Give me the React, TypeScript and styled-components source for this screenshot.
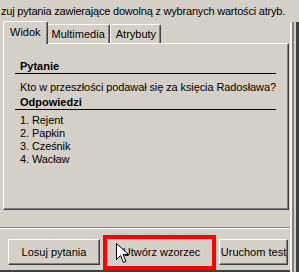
import React from "react";
import styled, { createGlobalStyle } from "styled-components";

const Global = createGlobalStyle`
  html, body { margin: 0; padding: 0; background: #d4d0c8; }
  body { font-family: "Liberation Sans", Arial, sans-serif; font-size: 11px; color: #000; }
`;

const Window = styled.div`
  width: 299px;
  height: 272px;
  display: flex;
  overflow: hidden;
  background: #d4d0c8;
  position: relative;
`;

const Main = styled.div`
  width: 290px;
  display: flex;
  flex-direction: column;
`;

const RightFrame = styled.div`
  flex: 1;
  border-left: 2px solid #f4f2ee;
  box-shadow: inset 2px 0 0 #808080, inset -3px 0 0 #404040;
  margin-top: 22px;
`;

const Caption = styled.div`
  height: 21px;
  padding: 5px 0 0 1px;
  box-sizing: border-box;
  white-space: nowrap;
  line-height: 13px;
  letter-spacing: -0.2px;
`;

const TabRow = styled.div`
  display: flex;
  align-items: flex-end;
  height: 22px;
  padding-left: 3px;
  position: relative;
  z-index: 1;
`;

const Tab = styled.div<{ $active?: boolean }>`
  height: 19px;
  box-sizing: border-box;
  padding: 3px 4px 0 5px;
  border-top: 1px solid #fff;
  border-left: 1px solid #fff;
  border-right: 1px solid #404040;
  box-shadow: inset -1px 0 0 #808080;
  border-radius: 2px 2px 0 0;
  background: #d4d0c8;
  font-size: 11px;
  line-height: 13px;
  white-space: nowrap;
  ${(p) =>
    p.$active
      ? "z-index: 2; position: relative; height: 23px; margin: 0 -2px -1px 0; padding: 4px 6px 0 6px;"
      : ""}
`;

const Panel = styled.div`
  margin-left: 3px;
  width: 286px;
  height: 168px;
  box-sizing: border-box;
  border-top: 1px solid #fff;
  border-left: 1px solid #fff;
  border-right: 1px solid #404040;
  border-bottom: 1px solid #404040;
  box-shadow: inset -1px -1px 0 #808080;
  padding: 16px 12px 0 11px;
`;

const Heading = styled.div`
  font-weight: bold;
  font-size: 11px;
  line-height: 13px;
  padding-left: 5px;
  border-bottom: 1px solid #000;
  width: 256px;
`;

const Body = styled.div<{ $top: number; $bottom: number }>`
  padding: ${(p) => p.$top}px 0 ${(p) => p.$bottom}px 5px;
  font-size: 11px;
  line-height: 13px;
  white-space: nowrap;
  letter-spacing: -0.1px;
`;

const Separator = styled.div`
  height: 20px;
  box-sizing: border-box;
  border-bottom: 1px solid #fff;
  box-shadow: inset 0 -1px 0 #808080;
  margin-bottom: 5px;
`;

const ButtonRow = styled.div`
  display: flex;
  align-items: center;
  padding-left: 8px;
  gap: 3px;
  height: 36px;
  border-bottom: 2px solid #404040;
`;

const Button = styled.div<{ $w: number }>`
  width: ${(p) => p.$w}px;
  height: 26px;
  box-sizing: border-box;
  display: flex;
  align-items: center;
  justify-content: center;
  border-top: 1px solid #fff;
  border-left: 1px solid #fff;
  border-right: 1px solid #404040;
  border-bottom: 1px solid #404040;
  box-shadow: inset -1px -1px 0 #808080;
  font-size: 11px;
  white-space: nowrap;
`;

const Highlight = styled.div`
  width: 113px;
  height: 35px;
  box-sizing: border-box;
  border: 4px solid #ff0000;
  display: flex;
  align-items: center;
  justify-content: center;
  position: relative;
  font-size: 11px;
  white-space: nowrap;
  padding-left: 4px;
`;

const Cursor = styled.svg`
  position: absolute;
  left: 9px;
  top: 4px;
`;

export default function App() {
  return (
    <>
      <Global />
      <Window>
        <Main>
          <Caption>zuj pytania zawierające dowolną z wybranych wartości atryb.</Caption>
          <TabRow>
            <Tab $active>Widok</Tab>
            <Tab>Multimedia</Tab>
            <Tab>Atrybuty</Tab>
          </TabRow>
          <Panel>
            <Heading>Pytanie</Heading>
            <Body $top={7} $bottom={2}>Kto w przeszłości podawał się za księcia Radosława?</Body>
            <Heading>Odpowiedzi</Heading>
            <Body $top={4} $bottom={0}>
              1. Rejent<br />2. Papkin<br />3. Cześnik<br />4. Wacław
            </Body>
          </Panel>
          <Separator />
          <ButtonRow>
            <Button $w={92}>Losuj pytania</Button>
            <Highlight>
              Utwórz wzorzec
              <Cursor width="13" height="21" viewBox="0 0 13 21">
                <path d="M0.5 0.5 L0.5 16.5 L4.5 12.5 L7.5 19.5 L10 18.5 L7 11.5 L12.5 11.5 Z" fill="#fff" stroke="#000" strokeWidth="1" />
              </Cursor>
            </Highlight>
            <Button $w={69}>Uruchom test</Button>
          </ButtonRow>
        </Main>
        <RightFrame />
      </Window>
    </>
  );
}
